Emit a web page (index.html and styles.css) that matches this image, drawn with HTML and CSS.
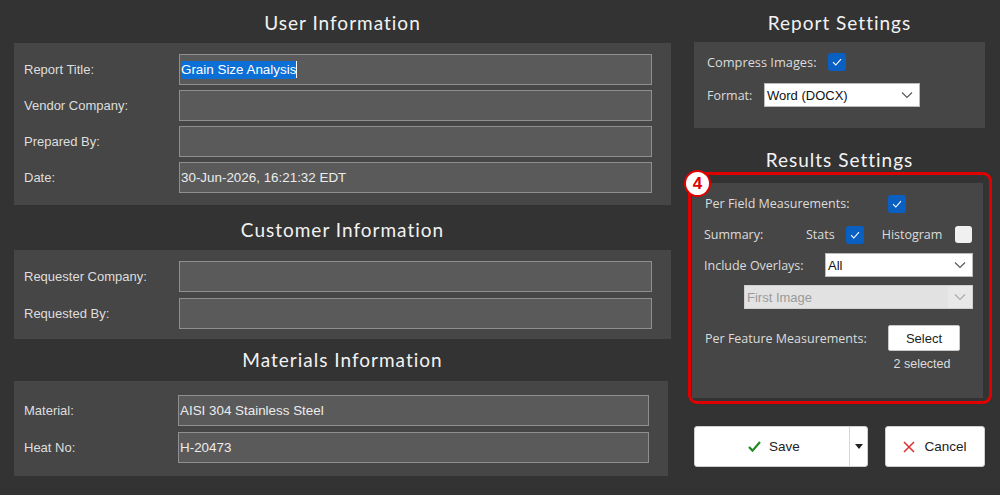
FILE: index.html
```html
<!DOCTYPE html>
<html>
<head>
<meta charset="utf-8">
<link rel="stylesheet" href="styles.css">
</head>
<body>
<div class="app">
  <div class="col-left">
    <h2 class="heading h-user">User Information</h2>
    <div class="panel panel-user">
      <div class="label">Report Title:</div>
      <div class="field"><span class="sel">Grain Size Analysis</span><span class="caret"></span></div>
      <div class="label">Vendor Company:</div>
      <div class="field"></div>
      <div class="label">Prepared By:</div>
      <div class="field"></div>
      <div class="label">Date:</div>
      <div class="field">30-Jun-2026, 16:21:32 EDT</div>
    </div>

    <h2 class="heading h-customer">Customer Information</h2>
    <div class="panel panel-customer">
      <div class="label">Requester Company:</div>
      <div class="field"></div>
      <div class="label">Requested By:</div>
      <div class="field"></div>
    </div>

    <h2 class="heading h-materials">Materials Information</h2>
    <div class="panel panel-materials">
      <div class="label">Material:</div>
      <div class="field">AISI 304 Stainless Steel</div>
      <div class="label">Heat No:</div>
      <div class="field">H-20473</div>
    </div>
  </div>

  <div class="col-right">
    <h2 class="heading h-report">Report Settings</h2>
    <div class="rpanel report-panel">
      <div class="rrow">
        <span class="rlabel compress-label">Compress Images:</span>
        <span class="cb on"><svg viewBox="0 0 18 18" width="18" height="18"><path d="M5 9.2 L7.8 12 L13 6.2" fill="none" stroke="#fff" stroke-width="1.1"/></svg></span>
      </div>
      <div class="rrow format-row">
        <span class="rlabel format-label">Format:</span>
        <div class="select format-select"><span>Word (DOCX)</span><svg class="chev" viewBox="0 0 12 8" width="12" height="8"><path d="M1 1.5 L6 6.5 L11 1.5" fill="none" stroke="#555" stroke-width="1.1"/></svg></div>
      </div>
    </div>

    <h2 class="heading h-results">Results Settings</h2>
    <div class="rpanel results-panel">
      <div class="highlight"></div>
      <div class="badge">4</div>
      <div class="rrow r1">
        <span class="rlabel w183">Per Field Measurements:</span>
        <span class="cb on"><svg viewBox="0 0 18 18" width="18" height="18"><path d="M5 9.2 L7.8 12 L13 6.2" fill="none" stroke="#fff" stroke-width="1.1"/></svg></span>
      </div>
      <div class="rrow r2">
        <span class="rlabel w102">Summary:</span>
        <span class="rlabel">Stats</span>
        <span class="cb on stats-cb"><svg viewBox="0 0 18 18" width="18" height="18"><path d="M5 9.2 L7.8 12 L13 6.2" fill="none" stroke="#fff" stroke-width="1.1"/></svg></span>
        <span class="rlabel hist-label">Histogram</span>
        <span class="cb off"></span>
      </div>
      <div class="rrow r3">
        <span class="rlabel w121">Include Overlays:</span>
        <div class="select grow"><span>All</span><svg class="chev" viewBox="0 0 12 8" width="12" height="8"><path d="M1 1.5 L6 6.5 L11 1.5" fill="none" stroke="#555" stroke-width="1.1"/></svg></div>
      </div>
      <div class="rrow r4">
        <div class="select disabled grow"><span>First Image</span><span class="dis-arrow"><svg class="chev" viewBox="0 0 12 8" width="12" height="8"><path d="M1 1.5 L6 6.5 L11 1.5" fill="none" stroke="#aaa" stroke-width="1.1"/></svg></span></div>
      </div>
      <div class="rrow r5">
        <span class="rlabel w183">Per Feature Measurements:</span>
        <button class="select-btn">Select</button>
      </div>
      <div class="rrow r6">
        <span class="selected-count">2 selected</span>
      </div>
    </div>

    <div class="actions">
      <div class="btn save-btn">
        <span class="save-main"><svg viewBox="0 0 14 12" width="13" height="11"><path d="M1 6.5 L4.8 10.5 L13 1" fill="none" stroke="#1f8a1f" stroke-width="2.4"/></svg>Save</span>
        <span class="save-drop"><svg viewBox="0 0 8 5" width="8" height="5"><path d="M0 0 L8 0 L4 5 Z" fill="#222"/></svg></span>
      </div>
      <div class="btn cancel-btn"><svg viewBox="0 0 12 12" width="12" height="12"><path d="M1 1 L11 11 M11 1 L1 11" stroke="#d83030" stroke-width="1.5"/></svg>Cancel</div>
    </div>
  </div>
</div>
</body>
</html>
```

FILE: styles.css
```css
* { box-sizing: border-box; }
html, body { margin: 0; padding: 0; }
body {
  background: #333333;
  width: 1000px;
  height: 495px;
  overflow: hidden;
  font-family: "Liberation Sans", Arial, sans-serif;
}
.app {
  display: flex;
  padding-left: 14px;
}
.col-left { width: 657px; display: flex; flex-direction: column; }
.col-right { width: 291px; margin-left: 23px; display: flex; flex-direction: column; }

.heading {
  margin: 0;
  font-family: Lato, "Open Sans", sans-serif;
  font-weight: 400;
  font-size: 19px;
  line-height: 24px;
  letter-spacing: 1px;
  color: #f2f2f2;
  text-align: center;
}
.h-user { padding: 11px 0 8px; }
.h-customer { padding: 13px 0 8px; }
.h-materials { padding: 9px 0 9px; }
.h-report { padding: 11px 0 7px; }
.h-results { padding: 20px 0 11px; }

.panel {
  background: #464646;
  display: grid;
  grid-template-columns: 155px 1fr;
  row-gap: 5px;
  align-items: center;
  padding: 11px 19px 12px 10px;
}
.panel-customer { padding: 11px 19px 10px 10px; row-gap: 6px; }
.panel-materials { width: 654px; padding: 14px 19px 13px 10px; row-gap: 6px; grid-template-columns: 154px 1fr; }

.label {
  color: #dedede;
  font-size: 13px;
}
.field {
  height: 31px;
  background: #5a5a5a;
  border: 1px solid #8f8f8f;
  color: #ececec;
  font-size: 13.4px;
  display: flex;
  align-items: center;
  padding-left: 1px;
}
.sel {
  background: #0b6fd6;
  color: #fff;
  padding: 1px 0 2px;
}
.caret {
  width: 1px;
  height: 17px;
  background: #fff;
}

.rpanel {
  background: #464646;
  position: relative;
}
.report-panel { padding: 11px 10px 21px 13px; }
.results-panel { padding: 12px 10px 0 12px; height: 215px; margin-left: -2px; width: 291px; }

.rrow { display: flex; align-items: center; }
.rlabel {
  color: #dcdcdc;
  font-family: "Open Sans", "Noto Sans", sans-serif;
  font-size: 12.5px;
  white-space: nowrap;
}
.compress-label { width: 121px; font-size: 12.8px; }
.format-row { margin-top: 12px; }
.format-label { width: 57px; }

.cb {
  width: 18px;
  height: 18px;
  border-radius: 3px;
  display: inline-block;
  flex: none;
}
.cb.on { background: #0a5fc2; }
.cb.off { background: #f0f0f0; width: 17px; height: 17px; }
.cb svg { display: block; }

.select {
  height: 24px;
  background: #fff;
  border: 1px solid #bbb;
  display: flex;
  align-items: center;
  justify-content: space-between;
  padding: 0 6px 0 2px;
  font-family: "Liberation Sans", Arial, sans-serif;
  font-size: 13px;
  color: #111;
}
.format-select { width: 156px; }
.grow { flex: 1; }
.chev { display: block; }
.select.disabled {
  background: #e2e2e2;
  border-color: #cfcfcf;
  color: #9a9a9a;
  padding-right: 0;
}
.dis-arrow {
  width: 24px;
  height: 22px;
  background: #e8e8e8;
  display: flex;
  align-items: center;
  justify-content: center;
}

.w183 { width: 183px; }
.w102 { width: 102px; }
.w121 { width: 121px; }
.r1 { height: 17px; margin-left: 1px; }
.r2 { margin-top: 14px; height: 17px; }
.stats-cb { margin-left: 11px; }
.hist-label { margin-left: 18px; width: 73px; }
.r3 { margin-top: 10px; }
.r4 { margin-top: 8px; margin-left: 40px; }
.r5 { margin-top: 16px; margin-left: 1px; }
.select-btn {
  width: 72px;
  height: 26px;
  background: #fff;
  border: 1px solid #c8c8c8;
  border-radius: 2px;
  font-family: "Liberation Sans", Arial, sans-serif;
  font-size: 13px;
  color: #222;
  padding: 0;
}
.r6 { margin-top: 6px; padding-left: 182px; }
.selected-count {
  width: 72px;
  text-align: center;
  color: #dcdcdc;
  font-family: "Liberation Sans", Arial, sans-serif;
  font-size: 12.5px;
}

.highlight {
  position: absolute;
  left: -4px;
  top: -11px;
  right: -9px;
  bottom: -6px;
  border: 3px solid #e00000;
  border-radius: 9px;
  pointer-events: none;
}
.badge {
  position: absolute;
  left: -8px;
  top: -13px;
  width: 27px;
  height: 27px;
  border-radius: 50%;
  background: #fff;
  border: 2px solid #e00000;
  color: #e00000;
  font-family: "Liberation Sans", Arial, sans-serif;
  font-weight: bold;
  font-size: 17px;
  display: flex;
  align-items: center;
  justify-content: center;
}

.actions {
  display: flex;
  margin-top: 28px;
  justify-content: space-between;
}
.btn {
  height: 41px;
  background: #fff;
  border: 1px solid #cfcfcf;
  border-radius: 3px;
  display: flex;
  align-items: center;
  font-family: "Liberation Sans", Arial, sans-serif;
  font-size: 13.5px;
  color: #222;
}
.save-btn { width: 174px; padding: 0; }
.save-main {
  flex: 1;
  height: 100%;
  display: flex;
  align-items: center;
  justify-content: center;
  gap: 8px;
  padding-left: 4px;
}
.save-drop {
  width: 18px;
  height: 100%;
  border-left: 1px solid #d6d6d6;
  display: flex;
  align-items: center;
  justify-content: center;
}
.cancel-btn {
  width: 100px;
  justify-content: center;
  gap: 9px;
}
.btn svg { display: block; }
```
